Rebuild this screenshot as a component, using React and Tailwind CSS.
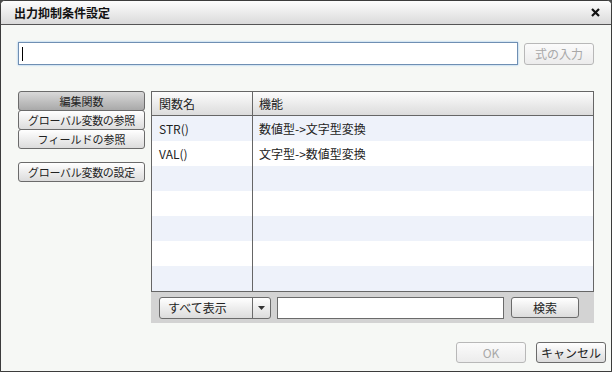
import React from 'react';

const btn = 'flex items-center justify-center border rounded-[3px] text-[12px] leading-none';
const btnOn = 'border-[#6b6b6b] text-[#222] bg-gradient-to-b from-[#ffffff] to-[#dcdcdc]';
const btnOff = 'border-[#b8b8b8] text-[#a8a8a8] bg-gradient-to-b from-[#fbfbfb] to-[#ececec]';

const rows = [
  { name: 'STR()', desc: '数値型->文字型変換' },
  { name: 'VAL()', desc: '文字型->数値型変換' },
  {}, {}, {}, {}, {},
];

export default function App() {
  return (
    <div className="w-[612px] h-[372px] bg-[#4a4a4a]" style={{ fontFamily: '"Noto Sans CJK JP", "Liberation Sans", sans-serif' }}>
      <div className="w-full h-full flex flex-col border border-[#3c3c3c] rounded-t-[5px] bg-[#f6f8f5] overflow-hidden">
        {/* title bar */}
        <div className="h-[24px] shrink-0 flex items-center justify-between pl-[13px] pr-[11px] bg-gradient-to-b from-[#fdfdfd] to-[#dadada] border-b border-[#555]">
          <span className="text-[12px] font-bold text-[#111] leading-none">出力抑制条件設定</span>
          <svg width="9" height="9" viewBox="0 0 9 9">
            <path d="M1 1 L8 8 M8 1 L1 8" stroke="#111" strokeWidth="2.2" />
          </svg>
        </div>

        <div className="flex-1 flex flex-col pl-[17px] pr-[5px]">
          {/* formula input */}
          <div className="flex items-center mt-[17px] gap-[6px]">
            <div className="w-[500px] h-[23px] bg-white border border-[#6f8fb3] shadow-[0_0_2px_#8fc0ef] flex items-center pl-[3px]">
              <div className="w-px h-[14px] bg-black" />
            </div>
            <div className={`${btn} ${btnOff} w-[70px] h-[22px]`}>式の入力</div>
          </div>

          <div className="flex mt-[26px] gap-[6px]">
            {/* left menu */}
            <div className="w-[127px] flex flex-col text-[11px]">
              <div className="flex items-center justify-center border rounded-[3px] leading-none h-[20px] border-[#6b6b6b] text-[#222] bg-gradient-to-b from-[#d9d9d9] to-[#a9a9a9]">編集関数</div>
              <div className={`flex items-center justify-center border rounded-[3px] leading-none tracking-[-0.3px] ${btnOn} h-[20px] -mt-px`}>グローバル変数の参照</div>
              <div className={`flex items-center justify-center border rounded-[3px] leading-none ${btnOn} h-[20px] -mt-px`}>フィールドの参照</div>
              <div className={`flex items-center justify-center border rounded-[3px] leading-none tracking-[-0.3px] ${btnOn} h-[20px] mt-[13px]`}>グローバル変数の設定</div>
            </div>

            {/* table */}
            <div className="w-[443px] flex flex-col">
              <div className="border border-[#666] bg-white">
                <div className="flex h-[24px] bg-gradient-to-b from-[#fcfcfc] to-[#dcdcdc] border-b border-[#666] text-[12px] text-[#222]">
                  <div className="w-[101px] border-r border-[#666] pl-[7px] flex items-center">関数名</div>
                  <div className="flex-1 pl-[6px] flex items-center">機能</div>
                </div>
                {rows.map((r, i) => (
                  <div key={i} className={`flex h-[25px] text-[12px] text-[#222] ${i % 2 === 0 ? 'bg-[#eef2fa]' : 'bg-white'}`}>
                    <div className="w-[101px] border-r border-[#666] pl-[7px] flex items-center">{r.name}</div>
                    <div className="flex-1 pl-[6px] flex items-center">{r.desc}</div>
                  </div>
                ))}
              </div>
              {/* toolbar */}
              <div className="h-[31px] bg-[#d3d3d3] flex items-center pl-[8px] gap-[6px]">
                <div className="w-[112px] h-[22px] flex border border-[#6b6b6b] rounded-[3px] bg-gradient-to-b from-[#ffffff] to-[#dcdcdc] text-[12px] text-[#222]">
                  <div className="flex-1 flex items-center pl-[8px] border-r border-[#6b6b6b]">すべて表示</div>
                  <div className="w-[17px] flex items-center justify-center">
                    <svg width="7" height="4" viewBox="0 0 7 4"><path d="M0 0 H7 L3.5 4 Z" fill="#333" /></svg>
                  </div>
                </div>
                <div className="w-[227px] h-[22px] bg-white border border-[#6b6b6b]" />
                <div className={`${btn} ${btnOn} w-[68px] h-[21px] ml-[1px]`}>検索</div>
              </div>
            </div>
          </div>

          {/* footer */}
          <div className="flex justify-end gap-[10px] mt-[19px]">
            <div className={`${btn} ${btnOff} w-[70px] h-[21px]`}>OK</div>
            <div className={`${btn} ${btnOn} w-[70px] h-[21px]`}>キャンセル</div>
          </div>
        </div>
      </div>
    </div>
  );
}
